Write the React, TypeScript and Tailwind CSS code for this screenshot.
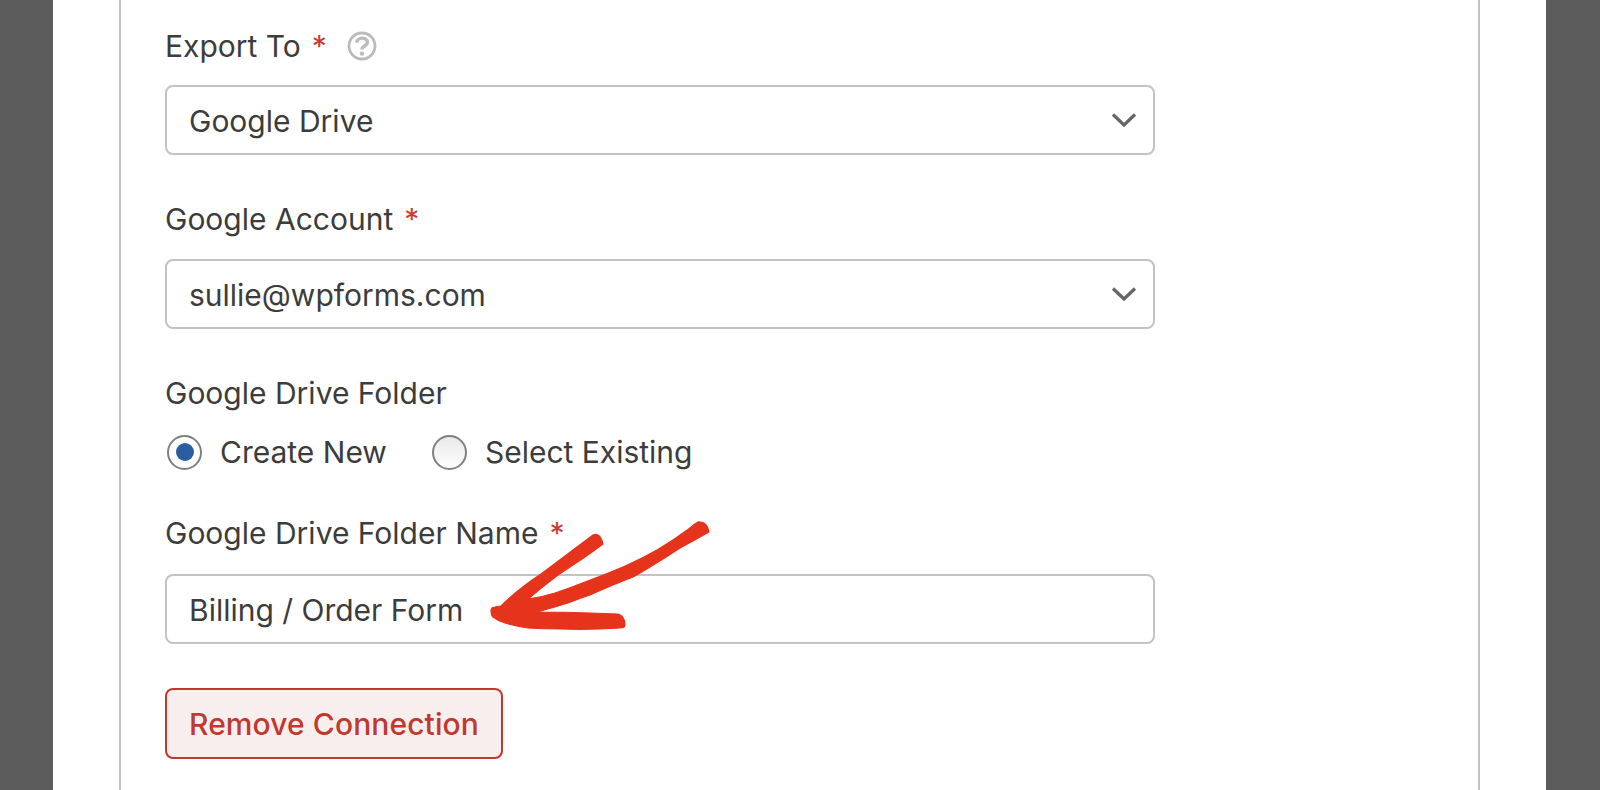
import React from "react";

const Req = () => <span className="text-[#cb3a2f] ml-[11px]">*</span>;

const Chevron = () => (
  <svg width="26" height="16" viewBox="0 0 26 16" fill="none" className="mr-[16px]">
    <path d="M2 2.5 L13 13 L24 2.5" stroke="#666666" strokeWidth="3.2" />
  </svg>
);

const HelpIcon = () => (
  <svg width="30" height="30" viewBox="0 0 30 30" fill="none" className="ml-[20px]">
    <circle cx="15" cy="15" r="13" stroke="#bbbbbb" strokeWidth="2.8" />
    <path d="M9.8 11.8 C10 5.6 20.4 5.6 20.4 11.4 C20.4 15 15 14.6 15 18.6" stroke="#bbbbbb" strokeWidth="3.4" />
    <circle cx="15" cy="22.6" r="2.2" fill="#bbbbbb" />
  </svg>
);

const SelectBox = ({ value }: { value: string }) => (
  <div className="flex items-center justify-between h-[70px] w-[990px] border-2 border-[#c3c3c3] rounded-[8px] pl-[22px] bg-white">
    <span className="pt-[2px]">{value}</span>
    <Chevron />
  </div>
);

const Radio = ({ checked, label }: { checked?: boolean; label: string }) => (
  <div className="flex items-center gap-[18px]">
    <div
      className={
        checked
          ? "flex items-center justify-center w-[35px] h-[35px] rounded-full border-2 border-[#808080] bg-white"
          : "w-[35px] h-[35px] rounded-full border-2 border-[#808080] bg-gradient-to-b from-[#e8e8e8] to-white"
      }
    >
      {checked && <div className="w-[18px] h-[18px] rounded-full bg-[#2a5d9f]" />}
    </div>
    <span>{label}</span>
  </div>
);

const Arrow = () => (
  <svg
    className="absolute left-[480px] top-[510px]"
    width="240"
    height="130"
    viewBox="480 510 240 130"
  >
    <path
      fill="#e6331b"
      stroke="#e6331b"
      strokeWidth="1.2"
      strokeLinejoin="round"
      d="M491 611 Q491 607 495 607 Q499 606 501 606 Q518 589 541 574 L593 535
         Q600 532 603 544 Q595 550 585 557 Q570 567 558 575 Q542 587 528 599 Q542 597 555 593 Q570 588 585 582
         Q604 575 623 567 Q641 559 657 550 Q674 540 690 528 Q694 524 698 522 Q707 521 709 532 Q695 540 680 548
         Q665 558 650 567 Q642 572 633 577 Q623 581 613 585 Q601 590 590 595 Q578 599 568 603 Q552 608 537 612
         Q565 612 590 613 L618 614 Q625 616 625 625 Q625 628 620 628 Q590 630 560 629 Q543 629 528 628
         Q515 626 505 623 Q498 621 493 617 Q491 615 491 611 Z"
    />
  </svg>
);

export default function App() {
  return (
    <div className="relative flex h-[790px] w-[1600px] overflow-hidden bg-white font-['Inter',sans-serif] text-[30px] text-[#3c3c3c]">
      <div className="w-[53px] bg-[#5c5c5c]" />
      <div className="flex-1 pl-[66px] pr-[66px]">
        <div className="h-full border-x-2 border-[#c3c3c3] pl-[44px] pt-[26px]">
          <div className="flex flex-col gap-[19px] mb-[44px]">
            <div className="flex items-center h-[40px]">
              Export To
              <Req />
              <HelpIcon />
            </div>
            <SelectBox value="Google Drive" />
          </div>
          <div className="flex flex-col gap-[20px] mb-[44px]">
            <div className="flex items-center h-[40px]">
              Google Account
              <Req />
            </div>
            <SelectBox value="sullie@wpforms.com" />
          </div>
          <div className="flex flex-col gap-[19px] mb-[41px]">
            <div className="flex items-center h-[40px]">Google Drive Folder</div>
            <div className="flex items-center gap-[45px] h-[40px] pl-[2px]">
              <Radio checked label="Create New" />
              <Radio label="Select Existing" />
            </div>
          </div>
          <div className="flex flex-col gap-[21px] mb-[44px]">
            <div className="flex items-center h-[40px]">
              Google Drive Folder Name
              <Req />
            </div>
            <div className="flex items-center h-[70px] w-[990px] border-2 border-[#c3c3c3] rounded-[8px] pl-[22px] pt-[2px]">
              Billing / Order Form
            </div>
          </div>
          <button className="h-[71px] pl-[22px] pr-[22px] pt-[2px] border-2 border-[#c0392f] rounded-[8px] bg-[#f9eeee] text-[#c0392f] font-medium tracking-[0.1px]">
            Remove Connection
          </button>
        </div>
      </div>
      <div className="w-[54px] bg-[#5c5c5c]" />
      <Arrow />
    </div>
  );
}
